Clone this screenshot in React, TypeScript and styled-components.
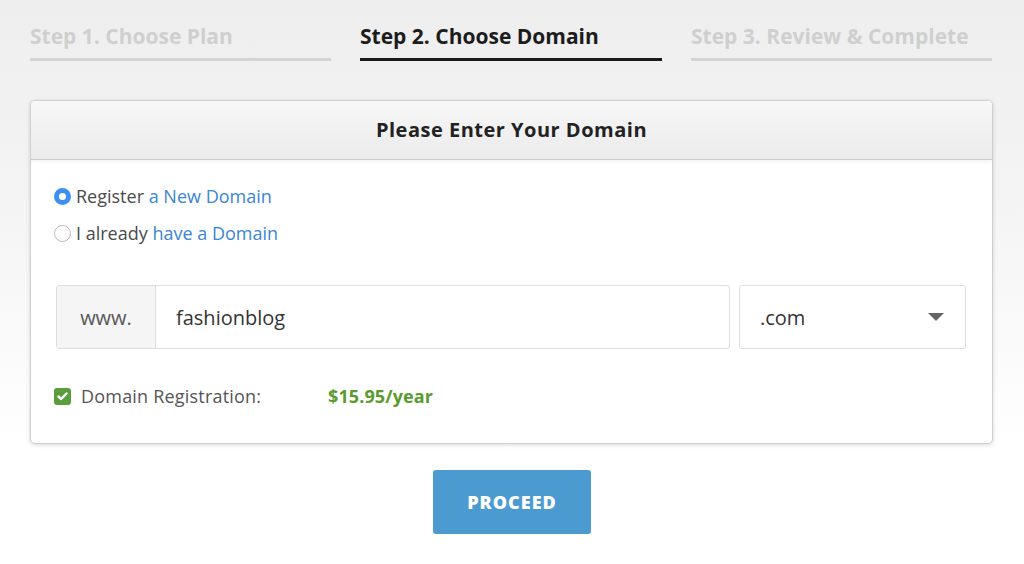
import React from "react";
import styled, { createGlobalStyle } from "styled-components";

const Global = createGlobalStyle`
  html, body { margin: 0; padding: 0; }
  body {
    font-family: "Open Sans", "Liberation Sans", sans-serif;
    background: linear-gradient(to bottom, #eeeeee 0px, #f4f4f4 200px, #ffffff 450px, #ffffff 100%);
    min-height: 564px;
  }
`;

const Page = styled.div`
  width: 1024px;
  height: 564px;
  box-sizing: border-box;
  padding: 20px 31px 0 30px;
  display: flex;
  flex-direction: column;
`;

const Steps = styled.div`
  display: grid;
  grid-template-columns: 301px 302px 301px;
  column-gap: 29px;
`;

const Step = styled.div<{ $active?: boolean }>`
  font-family: "Open Sans", sans-serif;
  font-weight: 700;
  font-size: 21px;
  letter-spacing: 0;
  line-height: 32px;
  padding-bottom: 6px;
  white-space: nowrap;
  color: ${(p) => (p.$active ? "#1c1c1c" : "#cfcfcf")};
  border-bottom: 3px solid ${(p) => (p.$active ? "#1a1a1a" : "#d4d4d4")};
`;

const Card = styled.div`
  margin-top: 39px;
  background: #fff;
  border: 1px solid #cfcfcf;
  border-radius: 5px;
  box-shadow: 0 1px 4px rgba(0, 0, 0, 0.15);
  overflow: hidden;
`;

const CardHeader = styled.div`
  height: 57px;
  padding-bottom: 1px;
  display: flex;
  align-items: center;
  justify-content: center;
  background: linear-gradient(to bottom, #f7f7f7, #ebebeb);
  border-bottom: 1px solid #cdcdcd;
  box-shadow: 0 2px 3px rgba(0, 0, 0, 0.05);
  font-family: "Open Sans", sans-serif;
  font-weight: 700;
  font-size: 20px;
  letter-spacing: 0.5px;
  color: #222;
`;

const CardBody = styled.div`
  padding: 24px 26px 35px 23px;
  display: flex;
  flex-direction: column;
`;

const RadioRow = styled.label`
  display: flex;
  align-items: center;
  height: 24px;
  margin-bottom: 13px;
  font-size: 18px;
  color: #4a4a4a;
  gap: 5px;
`;

const RadioDot = styled.span<{ $checked?: boolean }>`
  width: 17px;
  height: 17px;
  box-sizing: border-box;
  border-radius: 50%;
  border: ${(p) => (p.$checked ? "5px solid #3d8ff2" : "1px solid #b9b9b9")};
  background: #fff;
  flex: none;
`;

const Link = styled.span`
  color: #3b86d3;
`;

const InputRow = styled.div`
  margin-top: 27px;
  margin-left: 2px;
  display: flex;
  gap: 9px;
  height: 64px;
`;

const InputGroup = styled.div`
  flex: 1;
  display: flex;
  border: 1px solid #dedede;
  border-radius: 3px;
  overflow: hidden;
`;

const Addon = styled.div`
  width: 98px;
  flex: none;
  background: #f5f5f5;
  border-right: 1px solid #dedede;
  display: flex;
  align-items: center;
  justify-content: center;
  font-size: 20px;
  color: #555;
`;

const TextInput = styled.div`
  flex: 1;
  display: flex;
  align-items: center;
  padding-left: 20px;
  font-size: 20px;
  color: #333;
`;

const Select = styled.div`
  width: 227px;
  flex: none;
  border: 1px solid #dedede;
  border-radius: 3px;
  display: flex;
  align-items: center;
  justify-content: space-between;
  padding: 0 21px 0 20px;
  box-sizing: border-box;
  font-size: 20px;
  color: #333;
`;

const Caret = styled.span`
  width: 0;
  height: 0;
  border-left: 8px solid transparent;
  border-right: 8px solid transparent;
  border-top: 8px solid #666;
`;

const CheckRow = styled.div`
  margin-top: 35px;
  display: flex;
  align-items: center;
  font-size: 18px;
  color: #555;
  height: 24px;
`;

const CheckBox = styled.span`
  width: 17px;
  height: 17px;
  border-radius: 3px;
  background: #5a9e3b;
  display: flex;
  align-items: center;
  justify-content: center;
  margin-right: 10px;
  flex: none;
`;

const Label = styled.span`
  width: 247px;
  letter-spacing: 0.2px;
`;

const Price = styled.span`
  color: #5a9b2f;
  font-weight: 700;
  letter-spacing: 0.1px;
`;

const ButtonWrap = styled.div`
  display: flex;
  justify-content: center;
  margin-top: 26px;
  margin-right: -1px;
`;

const Button = styled.button`
  width: 158px;
  height: 64px;
  border: none;
  border-radius: 3px;
  background: #4b9bd1;
  color: #fff;
  font-family: "Open Sans", sans-serif;
  font-weight: 800;
  font-size: 18px;
  letter-spacing: 1px;
`;

export default function App() {
  return (
    <>
      <Global />
      <Page>
        <Steps>
          <Step>Step 1. Choose Plan</Step>
          <Step $active>Step 2. Choose Domain</Step>
          <Step>Step 3. Review &amp; Complete</Step>
        </Steps>
        <Card>
          <CardHeader>Please Enter Your Domain</CardHeader>
          <CardBody>
            <RadioRow>
              <RadioDot $checked />
              <span>
                Register <Link>a New Domain</Link>
              </span>
            </RadioRow>
            <RadioRow>
              <RadioDot />
              <span>
                I already <Link>have a Domain</Link>
              </span>
            </RadioRow>
            <InputRow>
              <InputGroup>
                <Addon>www.</Addon>
                <TextInput>fashionblog</TextInput>
              </InputGroup>
              <Select>
                <span>.com</span>
                <Caret />
              </Select>
            </InputRow>
            <CheckRow>
              <CheckBox>
                <svg width="11" height="9" viewBox="0 0 11 9">
                  <path d="M1.5 4.5 L4.2 7 L9.5 1.5" stroke="#fff" strokeWidth="2.4" fill="none" strokeLinecap="round" strokeLinejoin="round" />
                </svg>
              </CheckBox>
              <Label>Domain Registration:</Label>
              <Price>$15.95/year</Price>
            </CheckRow>
          </CardBody>
        </Card>
        <ButtonWrap>
          <Button>PROCEED</Button>
        </ButtonWrap>
      </Page>
    </>
  );
}
